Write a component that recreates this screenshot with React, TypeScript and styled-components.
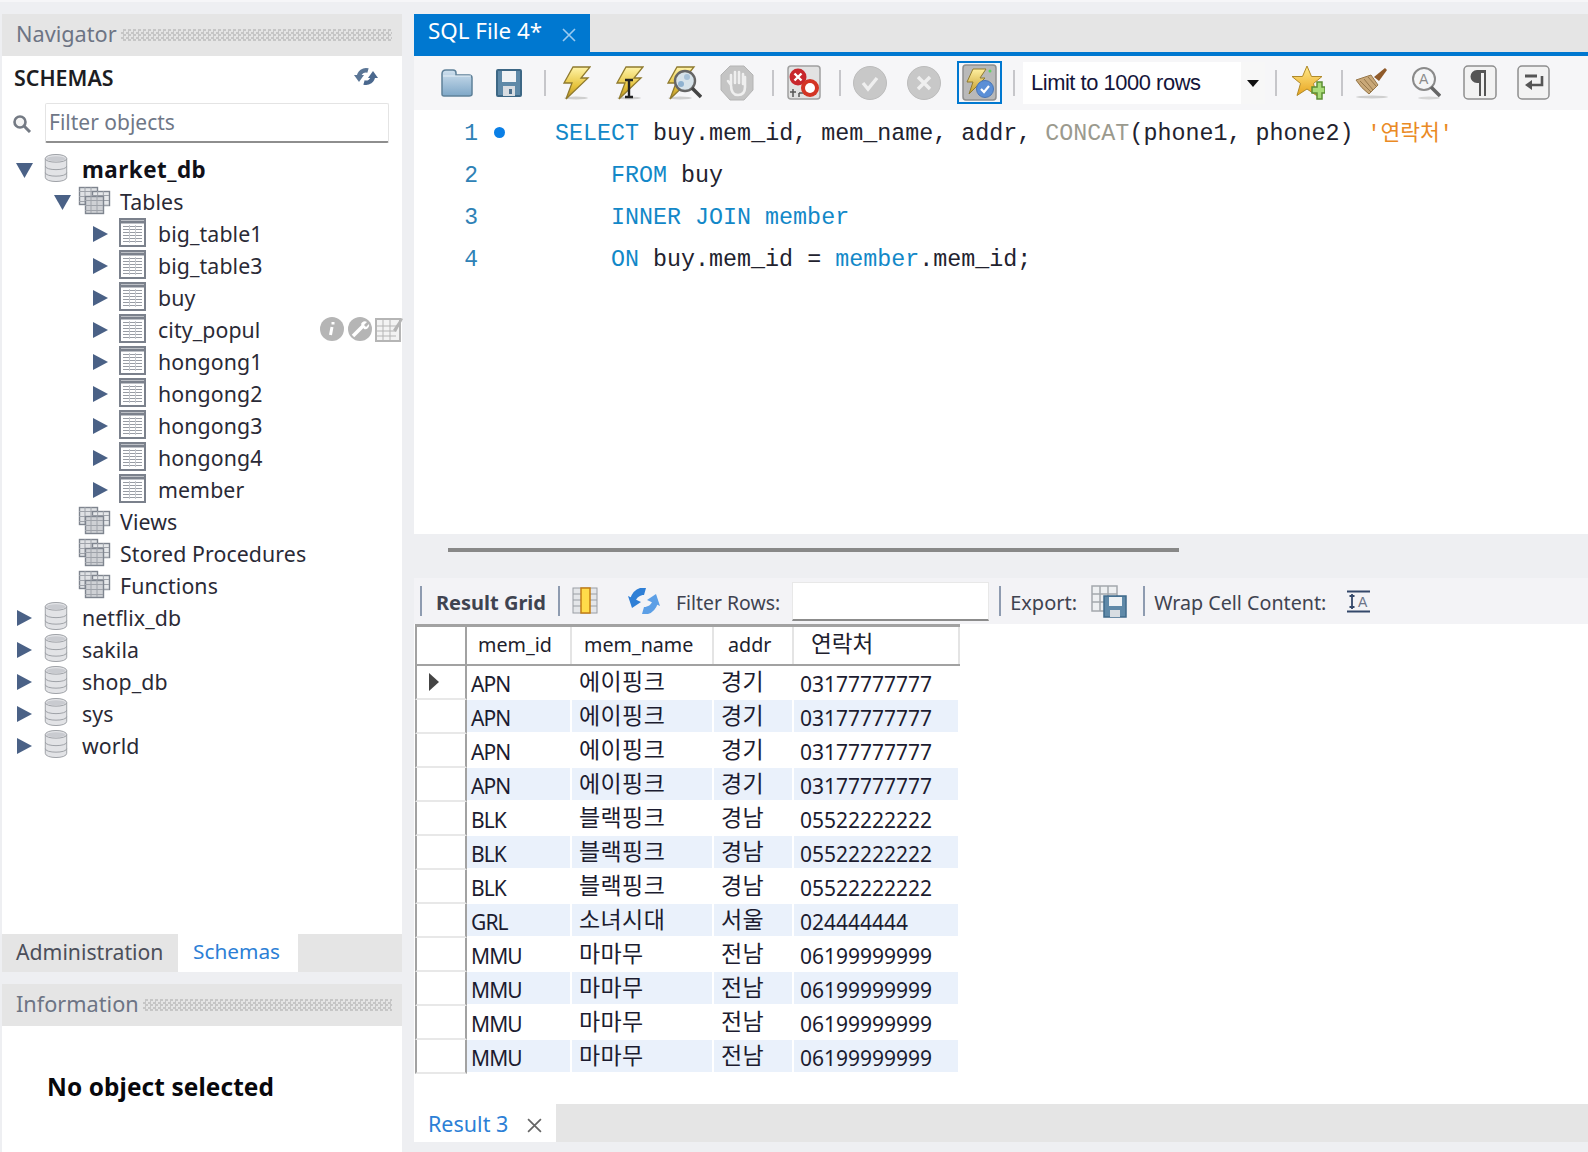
import React from 'react';
import styled, { createGlobalStyle } from 'styled-components';

const Global = createGlobalStyle`
  html, body { margin: 0; padding: 0; background: #eeeff2; }
  body { font-family: "Noto Sans", "Noto Sans CJK KR", sans-serif; color: #2b2b33; }
  * { box-sizing: border-box; }
`;
const ko = `"Noto Sans CJK KR", "Noto Sans", sans-serif`;

const Shell = styled.div`
  width: 1588px; height: 1152px; overflow: hidden;
  border-top: 2px solid #f6f6f8; padding: 12px 0 0 2px;
  display: flex; gap: 12px;
`;
const LeftColumn = styled.div`width: 400px; display: flex; flex-direction: column; height: 1138px;`;
const RightColumn = styled.div`flex: 1; display: flex; flex-direction: column; height: 1138px;`;

const PanelHeader = styled.div`
  height: 42px; flex: none; background: #e5e5e5; display: flex; align-items: center;
  padding: 0 10px 0 14px; color: #6d7484; font-size: 21.7px; gap: 4px; line-height: 38px;
`;
const HeaderText = styled.div`margin-bottom: 3px;`;
const Dots = styled.div`
  flex: 1; height: 12px;
  background: repeating-conic-gradient(#c6c6c6 0 25%, transparent 0 50%) 0 0 / 5px 5px;
`;
const NavBody = styled.div`flex: 1; background: #fff; display: flex; flex-direction: column;`;
const SchemaHead = styled.div`
  height: 44px; display: flex; align-items: center; justify-content: space-between;
  padding: 0 24px 0 12px; flex: none;
`;
const SchemaTitle = styled.div`font-size: 21.4px; font-weight: 600; color: #1d1d22; margin-bottom: 2px;`;
const RefreshSlot = styled.div`display: flex; margin-bottom: 4px;`;
const FilterRow = styled.div`height: 54px; display: flex; align-items: flex-start; padding-left: 10px; flex: none; padding-top: 3px;`;
const SearchSlot = styled.div`width: 33px; padding-top: 11px; flex: none; display: flex;`;
const FilterBox = styled.div`
  width: 344px; height: 40px; border: 1px solid #e4e4e4; border-bottom: 2px solid #8e8e8e;
  display: flex; align-items: center; padding: 0 0 2px 3px; color: #6f7787; font-size: 21px; border-radius: 2px;
`;
const Tree = styled.div`display: flex; flex-direction: column;`;
const TreeRow = styled.div<{ $depth: number }>`
  height: 32px; display: flex; align-items: center; padding-left: ${p => 14 + p.$depth * 38}px; position: relative;
`;
const Arrow = styled.div<{ $w: number }>`width: ${p => p.$w}px; flex: none; display: flex; align-items: center;`;
const IconSlot = styled.div<{ $w: number }>`width: ${p => p.$w}px; flex: none; display: flex; align-items: center; margin-top: -4px;`;
const TreeLabel = styled.div<{ $bold?: boolean }>`
  font-size: ${p => p.$bold ? 22.4 : 21.3}px; line-height: 32px; color: ${p => p.$bold ? '#101018' : '#2a2a36'};
  font-weight: ${p => p.$bold ? 700 : 400};
  letter-spacing: ${p => p.$bold ? .5 : .1}px;
`;
const HoverIcons = styled.div`position: absolute; left: 317px; top: 2px; display: flex;`;

const BottomTabs = styled.div`height: 38px; flex: none; background: #e5e5e5; display: flex;`;
const AdminTab = styled.div`width: 176px; padding-left: 14px; line-height: 36px; color: #4c4f5a; font-size: 21.2px;`;
const SchemasTab = styled.div`width: 120px; background: #fff; color: #2c7fd6; padding-left: 15px; line-height: 35px; font-size: 20.8px;`;
const PanelGap = styled.div`height: 12px; flex: none;`;
const InfoBody = styled.div`
  height: 126px; flex: none; background: #fff; padding: 40px 0 0 45px;
  font-size: 24.4px; font-weight: 700; color: #08080c; line-height: 42px; letter-spacing: .1px;
`;

const EditorTabs = styled.div`height: 42px; flex: none; background: #e5e5e5; border-bottom: 4px solid #0078d0;`;
const ActiveTab = styled.div`
  width: 176px; height: 38px; background: #0078d0; color: #fff; font-size: 22.4px;
  display: flex; align-items: center; padding-left: 14px;
`;
const ActiveTabText = styled.div`margin-bottom: 5px;`;
const TabClose = styled.div`margin-left: 20px; margin-top: 3px; display: flex;`;
const Toolbar = styled.div`
  height: 54px; flex: none; background: #f6f6f8; padding-left: 26px; display: flex; align-items: center;
`;
const Tool = styled.div<{ $w: number; $ml?: number }>`
  width: ${p => p.$w}px; margin-left: ${p => p.$ml ?? 0}px; flex: none; height: 38px;
  display: flex; align-items: center; justify-content: center;
`;
const Toggle = styled(Tool)`height: 43px; border: 2px solid #0078d0; margin-top: -1px;`;
const ToolSep = styled.div<{ $ml: number }>`width: 2px; height: 26px; background: #c6c6ca; flex: none; margin-left: ${p => p.$ml}px;`;
const LimitSelect = styled.div`
  width: 242px; height: 42px; margin-left: 8px; background: #fff; flex: none; display: flex; align-items: center;
  padding-left: 8px; font-family: "Liberation Sans", sans-serif; font-size: 21.9px; color: #14143a; position: relative; letter-spacing: -.45px;
`;
const SelectCaret = styled.div`
  position: absolute; right: 0; top: 0; width: 24px; height: 42px; background: #f7f7f7;
  display: flex; align-items: center; justify-content: center;
`;
const Editor = styled.div`height: 424px; flex: none; background: #fff; padding-top: 3px; font-family: "Liberation Mono", "Noto Sans CJK KR", monospace; font-size: 23.35px;`;
const CodeLine = styled.div`height: 42px; display: flex; align-items: center; color: #22222e;`;
const Gutter = styled.div`width: 141px; flex: none; display: flex; align-items: center; color: #2f82b6;`;
const LineNo = styled.div`width: 64px; text-align: right; font-size: 23px;`;
const Dot = styled.div`width: 11px; height: 11px; border-radius: 50%; background: #0a7fe6; margin: -4px 0 0 16px;`;
const Code = styled.div<{ $indent?: boolean }>`white-space: pre; line-height: 42px; margin-left: ${p => p.$indent ? 56 : 0}px;`;
const Kw = styled.span`color: #1288c8;`;
const Fn = styled.span`color: #9b9a8e;`;
const Str = styled.span`color: #ea8a24; font-size: 21.5px; line-height: 0;`;
const Splitter = styled.div`height: 44px; flex: none; padding: 14px 0 0 34px;`;
const SplitLine = styled.div`width: 731px; height: 4px; background: #888;`;
const ResultBar = styled.div`
  height: 46px; flex: none; background: #f3f3f6; display: flex; align-items: center; color: #3f4350; padding-left: 6px;
`;
const BarSep = styled.div<{ $ml: number }>`width: 2px; height: 30px; background: #8e9bb0; flex: none; margin-left: ${p => p.$ml}px;`;
const BarText = styled.div<{ $ml: number; $bold?: boolean; $fs?: number }>`
  margin-left: ${p => p.$ml}px; font-weight: ${p => p.$bold ? 700 : 400}; flex: none; white-space: nowrap;
  font-size: ${p => p.$fs ?? 19.7}px; margin-top: 2px;
`;
const BarIcon = styled.div<{ $ml: number }>`margin-left: ${p => p.$ml}px; display: flex; flex: none;`;
const FilterInput = styled.div`
  width: 197px; height: 39px; margin-left: 12px; background: #fff; flex: none; border: 1px solid #e8e8e8; border-bottom: 2px solid #8c8c8c;
`;
const ResultArea = styled.div`height: 480px; flex: none; background: #fff; padding-left: 1px;`;
const Row = styled.div<{ $head?: boolean }>`
  display: flex; height: ${p => p.$head ? 42 : 34}px;
  ${p => p.$head ? 'border-top: 3px solid #a2a2a2; border-bottom: 2px solid #a2a2a2;' : ''}
  width: 545px;
`;
const GutterCell = styled.div<{ $head?: boolean }>`
  width: 52px; flex: none; border-left: 2px solid #a2a2a2; border-right: 2px solid #a2a2a2;
  ${p => p.$head ? '' : 'border-bottom: 2px solid #e8e8e8;'}
  display: flex; align-items: center; padding-left: 12px;
`;
const HeadCell = styled.div<{ $w: number; $pl: number; $ko?: boolean }>`
  width: ${p => p.$w}px; padding-left: ${p => p.$pl}px; flex: none; border-right: 2px solid #e4e4e4;
  font-size: 19.7px; line-height: 35px; color: #20202c;
  ${p => p.$ko ? `font-family: ${ko}; font-size: 22.6px; line-height: 32px;` : ''}
`;
const Cell = styled.div<{ $w: number; $pl: number; $alt: boolean; $kind: 'code' | 'ko' | 'num' }>`
  width: ${p => p.$w}px; padding-left: ${p => p.$pl}px; flex: none; border-right: 2px solid #fff; border-bottom: 2px solid #fff;
  background: ${p => p.$alt ? '#eaf1fb' : '#fff'}; color: #1c1c30; white-space: nowrap;
  font-size: ${p => p.$kind === 'ko' ? 23 : 21}px;
  line-height: ${p => p.$kind === 'ko' ? 28 : 36}px;
  ${p => p.$kind === 'ko' ? `font-family: ${ko}; letter-spacing: .4px;` : ''}
  ${p => p.$kind === 'code' ? 'letter-spacing: -.9px;' : ''}
`;
const ResultTabs = styled.div`height: 38px; flex: none; background: #e5e5e5; display: flex;`;
const ResultTab = styled.div`
  width: 142px; background: #fff; color: #2c7fd6; font-size: 21.5px; padding-left: 14px; display: flex; align-items: center;
`;
const ResultClose = styled.div`margin-left: 19px; margin-top: 5px; display: flex;`;

const Down = () => <svg width="17" height="15"><path d="M0 0h17L8.500 15z" fill="#4a6186" /></svg>;
const Right = () => <svg width="16" height="18"><path d="M1 1l15 8-15 8z" fill="#4a6186" /></svg>;

const Db = () => (
  <svg width="24" height="28" viewBox="0 0 25 30">
    <path d="M1 5c0-6 23-6 23 0v20c0 6-23 6-23 0z" fill="#e2e3e6" stroke="#9a9da3" />
    <path d="M1 5c0 5 23 5 23 0M1 13c0 5 23 5 23 0M1 20c0 5 23 5 23 0" fill="none" stroke="#9a9da3" />
    <ellipse cx="12.500" cy="5" rx="10" ry="2.600" fill="#c9cbd0" />
  </svg>
);
const GridCells = ({ x, y, w, h, fill }: { x: number; y: number; w: number; h: number; fill: string }) => (
  <g>
    <rect x={x + .5} y={y + .5} width={w} height={h} fill={fill} stroke="#7f858f" strokeWidth="1.400" />
    <path d={`M${x} ${y + 4.5}h${w}M${x} ${y + 9.5}h${w}M${x} ${y + 14.5}h${w}M${x + w / 3} ${y}v${h}M${x + 2 * w / 3} ${y}v${h}`} stroke="#9fa3aa" />
  </g>
);
const Tables = () => (
  <svg width="33" height="29" viewBox="0 0 33 29">
    <GridCells x={1} y={1} w={18} h={17} fill="#dfe1e4" />
    <GridCells x={14} y={5} w={17} h={14} fill="#e6e8ea" />
    <GridCells x={7} y={10} w={18} h={17} fill="#cfd1d5" />
  </svg>
);
const TableIcon = () => (
  <svg width="27" height="29" viewBox="0 0 27 29">
    <rect x="1" y="1" width="25" height="27" fill="#fff" stroke="#7b818c" strokeWidth="2" />
    <path d="M2 4h23" stroke="#7b818c" strokeWidth="3" />
    <path d="M4 8.500h19M4 11.500h19M4 14.500h19M4 17.500h19M4 20.500h19M4 23.500h19" stroke="#989ca4" />
    <path d="M10.500 7v18M16.500 7v18" stroke="#c6c9ce" />
  </svg>
);
const SearchIcon = () => (
  <svg width="20" height="19" viewBox="0 0 20 19">
    <circle cx="8" cy="8" r="5.500" fill="#f4f4f4" stroke="#747a84" strokeWidth="2.600" />
    <path d="M12 12l6 6" stroke="#747a84" strokeWidth="3" />
  </svg>
);
const RefreshSmall = () => (
  <svg width="24" height="19" viewBox="0 0 24 19">
    <path d="M5 10a7 7 0 0 1 9-6.500" fill="none" stroke="#5b7696" strokeWidth="4.500" />
    <path d="M19 9a7 7 0 0 1-9 6.500" fill="none" stroke="#4a688e" strokeWidth="4.500" />
    <path d="M0 8h10l-5 7z" fill="#5b7696" />
    <path d="M24 11H14l5-7z" fill="#4a688e" />
  </svg>
);
const HoverSet = () => (
  <HoverIcons>
    <svg width="84" height="26" viewBox="0 0 84 26">
      <circle cx="13" cy="13" r="12" fill="#b5b5b5" />
      <path d="M14 6v2.500M13 11l-1.500 8" stroke="#fff" strokeWidth="3" />
      <circle cx="41" cy="13" r="12" fill="#b5b5b5" />
      <path d="M34 20l10-10" stroke="#fff" strokeWidth="3.500" />
      <path d="M42 8a4 4 0 0 1 6-2l-3 3 2 2 3-3a4 4 0 0 1-5 5z" fill="#fff" />
      <rect x="57" y="3" width="24" height="22" fill="#f3f3f3" stroke="#b5b5b5" strokeWidth="2" />
      <path d="M57 10h24M57 15h20M57 20h20M64 4v20M71 4v20" stroke="#b5b5b5" />
      <path d="M74 14l8-12 2 1-7 13z" fill="#b5b5b5" />
    </svg>
  </HoverIcons>
);
const X = ({ color, s = 14 }: { color: string; s?: number }) => (
  <svg width={s} height={s} viewBox="0 0 14 14"><path d="M1 1l12 12M13 1L1 13" stroke={color} strokeWidth="1.600" /></svg>
);

const Folder = () => (
  <svg width="33" height="30" viewBox="0 0 33 30">
    <defs><linearGradient id="fo" x1="0" y1="0" x2="0" y2="1"><stop offset="0" stopColor="#cfe0ee" /><stop offset="1" stopColor="#7ea7c7" /></linearGradient></defs>
    <path d="M2 6q0-4 4-4h7q3 0 3 3v2h13q3 0 3 3v16q0 2-3 2H4q-2 0-2-2z" fill="url(#fo)" stroke="#5f8199" strokeWidth="1.500" />
    <path d="M3 8h28" stroke="#e6eff6" />
  </svg>
);
const Save = () => (
  <svg width="26" height="28" viewBox="0 0 26 28">
    <rect x="1" y="1" width="24" height="26" rx="1" fill="#5e89a8" stroke="#3d6785" strokeWidth="2" />
    <rect x="6" y="2" width="14" height="11" fill="#f0f3f6" />
    <rect x="7" y="17" width="12" height="10" fill="#d8dde2" />
    <rect x="13" y="20" width="3" height="5" fill="#4c6f8c" />
  </svg>
);
const Bolt = ({ id }: { id: string }) => (
  <>
    <defs><linearGradient id={id} x1="0" y1="0" x2="0" y2="1"><stop offset="0" stopColor="#fff3a8" /><stop offset=".6" stopColor="#e6c33c" /><stop offset="1" stopColor="#b89024" /></linearGradient></defs>
    <ellipse cx="14" cy="32" rx="12" ry="1.500" fill="#cfcfcf" />
    <path d="M11 1h17l-9 11h7L4 33l6-16H2z" fill={`url(#${id})`} stroke="#8f7a2e" strokeWidth="1.300" />
  </>
);
const Bolt1 = () => <svg width="29" height="35" viewBox="0 0 29 35"><Bolt id="b1" /></svg>;
const Bolt2 = () => (
  <svg width="29" height="35" viewBox="0 0 29 35"><Bolt id="b2" />
    <path d="M10 14h8M10 31h8M14 14v17" stroke="#222" strokeWidth="2.400" fill="none" />
  </svg>
);
const BoltMag = () => (
  <svg width="36" height="35" viewBox="0 0 36 35"><Bolt id="b3" />
    <circle cx="19" cy="15" r="10" fill="#d7e3ea" stroke="#666" strokeWidth="2.400" />
    <circle cx="15" cy="18" r="3" fill="#8fb2d0" /><circle cx="21" cy="11" r="3" fill="#a8c2d8" />
    <path d="M26 22l9 9" stroke="#444" strokeWidth="3.500" />
  </svg>
);
const Hand = () => (
  <svg width="34" height="36" viewBox="0 0 34 36">
    <path d="M10 1h14l9 9v15l-9 10H10L1 25V10z" fill="#c4c4c4" stroke="#b4b4b4" />
    <path d="M11 20V10M15 18V7M19 18V7M23 19V9M11 20l-3-4M11 20q0 10 7 10t7-8V12" stroke="#efefef" strokeWidth="2.600" fill="none" strokeLinecap="round" />
  </svg>
);
const StopBox = () => (
  <svg width="34" height="36" viewBox="0 0 34 36">
    <rect x="1" y="1" width="32" height="33" rx="3" fill="#e2e2e2" stroke="#a0a0a0" strokeWidth="1.500" />
    <path d="M3 27h6M6 24v8M12 28v4M12 28h6" stroke="#555" strokeWidth="1.500" fill="none" />
    <circle cx="11" cy="12" r="8.500" fill="#c8262c" />
    <path d="M7.500 8.500l7 7M14.500 8.500l-7 7" stroke="#fff" strokeWidth="2.400" />
    <circle cx="23" cy="23" r="9" fill="#d33424" />
    <circle cx="23" cy="23" r="5" fill="#fff" />
  </svg>
);
const Check = () => (
  <svg width="34" height="36" viewBox="0 0 34 36">
    <circle cx="17" cy="18" r="16.500" fill="#c8c8c8" stroke="#bcbcbc" />
    <path d="M10 18l5 6 9-11" stroke="#efefef" strokeWidth="3.400" fill="none" />
  </svg>
);
const Cross = () => (
  <svg width="34" height="36" viewBox="0 0 34 36">
    <circle cx="17" cy="18" r="16.500" fill="#c8c8c8" stroke="#bcbcbc" />
    <path d="M11 12l12 12M23 12L11 24" stroke="#efefef" strokeWidth="3.400" />
  </svg>
);
const AutoCommit = () => (
  <svg width="35" height="37" viewBox="0 0 35 37">
    <defs><linearGradient id="b4" x1="0" y1="0" x2="0" y2="1"><stop offset="0" stopColor="#fff0a0" /><stop offset="1" stopColor="#c49a28" /></linearGradient></defs>
    <rect x="1" y="1" width="33" height="35" rx="3" fill="#b9b9b9" stroke="#8e8e8e" strokeWidth="1.500" />
    <path d="M11 5h13l-6 9h5L7 30l4-12H5z" fill="url(#b4)" stroke="#8f7a2e" />
    <circle cx="28" cy="7" r="1.500" fill="#5fd35f" />
    <circle cx="23" cy="25" r="8.500" fill="#5b8fd6" stroke="#4a76b5" />
    <path d="M19 25l3 3 5-6" stroke="#fff" strokeWidth="2.200" fill="none" />
  </svg>
);
const Star = () => (
  <svg width="33" height="36" viewBox="0 0 33 36">
    <defs><linearGradient id="st" x1="0" y1="0" x2="0" y2="1"><stop offset="0" stopColor="#ffe98a" /><stop offset="1" stopColor="#e8a41e" /></linearGradient></defs>
    <path d="M15 1l4.500 10.500H30l-8.500 7 3 12L15 24 5 30.500l3.500-12L0 11.500h10.500z" fill="url(#st)" stroke="#b08a2a" />
    <path d="M20 22h5v-5h5v5h3v6h-3v6h-5v-6h-5z" fill="#a9db78" stroke="#5c8f34" strokeWidth="1.500" />
  </svg>
);
const Broom = () => (
  <svg width="33" height="34" viewBox="0 0 33 34">
    <ellipse cx="17" cy="31" rx="16" ry="1.500" fill="#cfcfcf" />
    <path d="M1 14l15-5 7 10-9 9q-8-6-13-14z" fill="#c9a878" stroke="#96774a" />
    <path d="M5 15l11 11M9 13l9 11M13 11l8 9" stroke="#96774a" />
    <path d="M19 11l11-9 2 2-8 11z" fill="#8f5a2a" />
  </svg>
);
const MagA = () => (
  <svg width="30" height="35" viewBox="0 0 30 35">
    <ellipse cx="18" cy="32" rx="11" ry="1.500" fill="#d6d6d6" />
    <circle cx="13" cy="13" r="11" fill="#f5f6f7" stroke="#8b8b8b" strokeWidth="2" />
    <text x="8" y="18" fontSize="14" fontFamily="Liberation Sans" fill="#8b8b8b">A</text>
    <path d="M20 21l9 9" stroke="#666" strokeWidth="3.500" />
  </svg>
);
const Para = () => (
  <svg width="34" height="36" viewBox="0 0 34 36">
    <rect x="1" y="1" width="32" height="33" rx="4" fill="#f2f2f2" stroke="#8e8e8e" strokeWidth="1.500" />
    <path d="M25 5H14a6 6 0 0 0 0 13h2v13h2V8h3v23h2V5z" fill="#555" />
  </svg>
);
const Wrap = () => (
  <svg width="33" height="36" viewBox="0 0 33 36">
    <rect x="1" y="1" width="31" height="33" rx="4" fill="#f2f2f2" stroke="#8e8e8e" strokeWidth="1.500" />
    <path d="M8 11h12" stroke="#555" strokeWidth="3" />
    <path d="M25 11v9H14" stroke="#555" strokeWidth="2.600" fill="none" />
    <path d="M15 15v10l-7-5z" fill="#555" />
  </svg>
);
const GridPick = () => (
  <svg width="26" height="28" viewBox="0 0 26 28">
    <rect x="1" y="1" width="24" height="25" fill="#e4e6e9" stroke="#9a9ea4" />
    <path d="M1 7h24M1 13h24M1 19h24" stroke="#9a9ea4" />
    <rect x="9" y="1" width="9" height="25" fill="#ffdc4a" stroke="#c47e14" strokeWidth="1.500" />
  </svg>
);
const BigRefresh = () => (
  <svg width="32" height="28" viewBox="0 0 32 28">
    <path d="M18 1l-2 7c-4 0-7 2-9 7L2 12q3-9 10-11z" fill="#2f7fd6" />
    <path d="M0 9l13 6-9 6z" fill="#2f7fd6" />
    <path d="M14 27l2-7c4 0 7-2 9-7l5 3q-3 9-10 11z" fill="#5c9fe6" />
    <path d="M32 19l-13-6 9-6z" fill="#5c9fe6" />
  </svg>
);
const ExportIcon = () => (
  <svg width="36" height="33" viewBox="0 0 36 33">
    <rect x="1" y="1" width="25" height="25" fill="#eef0f2" stroke="#a4a8ad" strokeWidth="1.500" />
    <path d="M1 9h25M1 17h25M9 1v25M17 1v25" stroke="#a4a8ad" strokeWidth="1.500" />
    <rect x="13" y="11" width="22" height="21" fill="#5f89a8" stroke="#3f6a8a" strokeWidth="1.500" />
    <rect x="18" y="12" width="13" height="9" fill="#eef2f5" />
    <rect x="19" y="25" width="10" height="7" fill="#d8dde2" />
  </svg>
);
const WrapCell = () => (
  <svg width="23" height="23" viewBox="0 0 23 23">
    <path d="M0 1.500h23M0 21.500h23" stroke="#34486a" strokeWidth="2" />
    <path d="M5 4v15M2.500 6h5M2.500 17h5" stroke="#34486a" strokeWidth="1.800" />
    <text x="11" y="17" fontSize="14" fontFamily="Liberation Sans" fill="#6b7488">A</text>
  </svg>
);

const tableNames = ['big_table1', 'big_table3', 'buy', 'city_popul', 'hongong1', 'hongong2', 'hongong3', 'hongong4', 'member'];
const others = ['netflix_db', 'sakila', 'shop_db', 'sys', 'world'];
const groups = ['Views', 'Stored Procedures', 'Functions'];

const rows: [string, string, string, string][] = [
  ...Array(4).fill(['APN', '에이핑크', '경기', '03177777777']),
  ...Array(3).fill(['BLK', '블랙핑크', '경남', '05522222222']),
  ['GRL', '소녀시대', '서울', '024444444'],
  ...Array(4).fill(['MMU', '마마무', '전남', '06199999999']),
];

export default function App() {
  return (
    <>
      <Global />
      <Shell>
        <LeftColumn>
          <PanelHeader><HeaderText>Navigator</HeaderText><Dots /></PanelHeader>
          <NavBody>
            <SchemaHead><SchemaTitle>SCHEMAS</SchemaTitle><RefreshSlot><RefreshSmall /></RefreshSlot></SchemaHead>
            <FilterRow>
              <SearchSlot><SearchIcon /></SearchSlot>
              <FilterBox>Filter objects</FilterBox>
            </FilterRow>
            <Tree>
              <TreeRow $depth={0}><Arrow $w={28}><Down /></Arrow><IconSlot $w={38}><Db /></IconSlot><TreeLabel $bold>market_db</TreeLabel></TreeRow>
              <TreeRow $depth={1}><Arrow $w={24}><Down /></Arrow><IconSlot $w={42}><Tables /></IconSlot><TreeLabel>Tables</TreeLabel></TreeRow>
              {tableNames.map(n => (
                <TreeRow $depth={2} key={n}>
                  <Arrow $w={27}><Right /></Arrow><IconSlot $w={39}><TableIcon /></IconSlot><TreeLabel>{n}</TreeLabel>
                  {n === 'city_popul' && <HoverSet />}
                </TreeRow>
              ))}
              {groups.map(n => (
                <TreeRow $depth={1} key={n}><Arrow $w={24} /><IconSlot $w={42}><Tables /></IconSlot><TreeLabel>{n}</TreeLabel></TreeRow>
              ))}
              {others.map(n => (
                <TreeRow $depth={0} key={n}><Arrow $w={28}><Right /></Arrow><IconSlot $w={38}><Db /></IconSlot><TreeLabel>{n}</TreeLabel></TreeRow>
              ))}
            </Tree>
          </NavBody>
          <BottomTabs><AdminTab>Administration</AdminTab><SchemasTab>Schemas</SchemasTab></BottomTabs>
          <PanelGap />
          <PanelHeader><HeaderText>Information</HeaderText><Dots /></PanelHeader>
          <InfoBody>No object selected</InfoBody>
        </LeftColumn>
        <RightColumn>
          <EditorTabs>
            <ActiveTab><ActiveTabText>SQL File 4*</ActiveTabText><TabClose><X color="#9ccbf0" /></TabClose></ActiveTab>
          </EditorTabs>
          <Toolbar>
            <Tool $w={33}><Folder /></Tool>
            <Tool $w={26} $ml={23}><Save /></Tool>
            <ToolSep $ml={22} />
            <Tool $w={29} $ml={16}><Bolt1 /></Tool>
            <Tool $w={29} $ml={24}><Bolt2 /></Tool>
            <Tool $w={36} $ml={22}><BoltMag /></Tool>
            <Tool $w={34} $ml={18}><Hand /></Tool>
            <ToolSep $ml={18} />
            <Tool $w={34} $ml={13}><StopBox /></Tool>
            <ToolSep $ml={18} />
            <Tool $w={34} $ml={12}><Check /></Tool>
            <Tool $w={34} $ml={20}><Cross /></Tool>
            <Toggle $w={45} $ml={16}><AutoCommit /></Toggle>
            <ToolSep $ml={11} />
            <LimitSelect>Limit to 1000 rows
              <SelectCaret><svg width="12" height="7"><path d="M0 0h12L6 7z" fill="#111" /></svg></SelectCaret>
            </LimitSelect>
            <ToolSep $ml={10} />
            <Tool $w={33} $ml={15}><Star /></Tool>
            <ToolSep $ml={16} />
            <Tool $w={33} $ml={12}><Broom /></Tool>
            <Tool $w={30} $ml={23}><MagA /></Tool>
            <Tool $w={34} $ml={22}><Para /></Tool>
            <Tool $w={33} $ml={20}><Wrap /></Tool>
          </Toolbar>
          <Editor>
            <CodeLine><Gutter><LineNo>1</LineNo><Dot /></Gutter><Code><Kw>SELECT</Kw> buy.mem_id, mem_name, addr, <Fn>CONCAT</Fn>(phone1, phone2) <Str>'연락처'</Str></Code></CodeLine>
            <CodeLine><Gutter><LineNo>2</LineNo></Gutter><Code $indent><Kw>FROM</Kw> buy</Code></CodeLine>
            <CodeLine><Gutter><LineNo>3</LineNo></Gutter><Code $indent><Kw>INNER JOIN member</Kw></Code></CodeLine>
            <CodeLine><Gutter><LineNo>4</LineNo></Gutter><Code $indent><Kw>ON</Kw> buy.mem_id = <Kw>member</Kw>.mem_id;</Code></CodeLine>
          </Editor>
          <Splitter><SplitLine /></Splitter>
          <ResultBar>
            <BarSep $ml={0} />
            <BarText $ml={14} $bold $fs={20}>Result Grid</BarText>
            <BarSep $ml={12} />
            <BarIcon $ml={12}><GridPick /></BarIcon>
            <BarIcon $ml={30}><BigRefresh /></BarIcon>
            <BarText $ml={16} $fs={19.4}>Filter Rows:</BarText>
            <FilterInput />
            <BarSep $ml={10} />
            <BarText $ml={9} $fs={20}>Export:</BarText>
            <BarIcon $ml={14}><ExportIcon /></BarIcon>
            <BarSep $ml={16} />
            <BarText $ml={9}>Wrap Cell Content:</BarText>
            <BarIcon $ml={21}><WrapCell /></BarIcon>
          </ResultBar>
          <ResultArea>
            <Row $head>
              <GutterCell $head />
              <HeadCell $w={105} $pl={11}>mem_id</HeadCell>
              <HeadCell $w={142} $pl={12}>mem_name</HeadCell>
              <HeadCell $w={80} $pl={14}>addr</HeadCell>
              <HeadCell $w={166} $pl={17} $ko>연락처</HeadCell>
            </Row>
            {rows.map((r, i) => (
              <Row key={i}>
                <GutterCell>{i === 0 && <svg width="10" height="18"><path d="M0 0l10 9-10 9z" fill="#444" /></svg>}</GutterCell>
                <Cell $w={105} $pl={4} $alt={i % 2 === 1} $kind="code">{r[0]}</Cell>
                <Cell $w={142} $pl={7} $alt={i % 2 === 1} $kind="ko">{r[1]}</Cell>
                <Cell $w={80} $pl={7} $alt={i % 2 === 1} $kind="ko">{r[2]}</Cell>
                <Cell $w={166} $pl={6} $alt={i % 2 === 1} $kind="num">{r[3]}</Cell>
              </Row>
            ))}
          </ResultArea>
          <ResultTabs>
            <ResultTab>Result 3<ResultClose><X color="#666" s={15} /></ResultClose></ResultTab>
          </ResultTabs>
        </RightColumn>
      </Shell>
    </>
  );
}
